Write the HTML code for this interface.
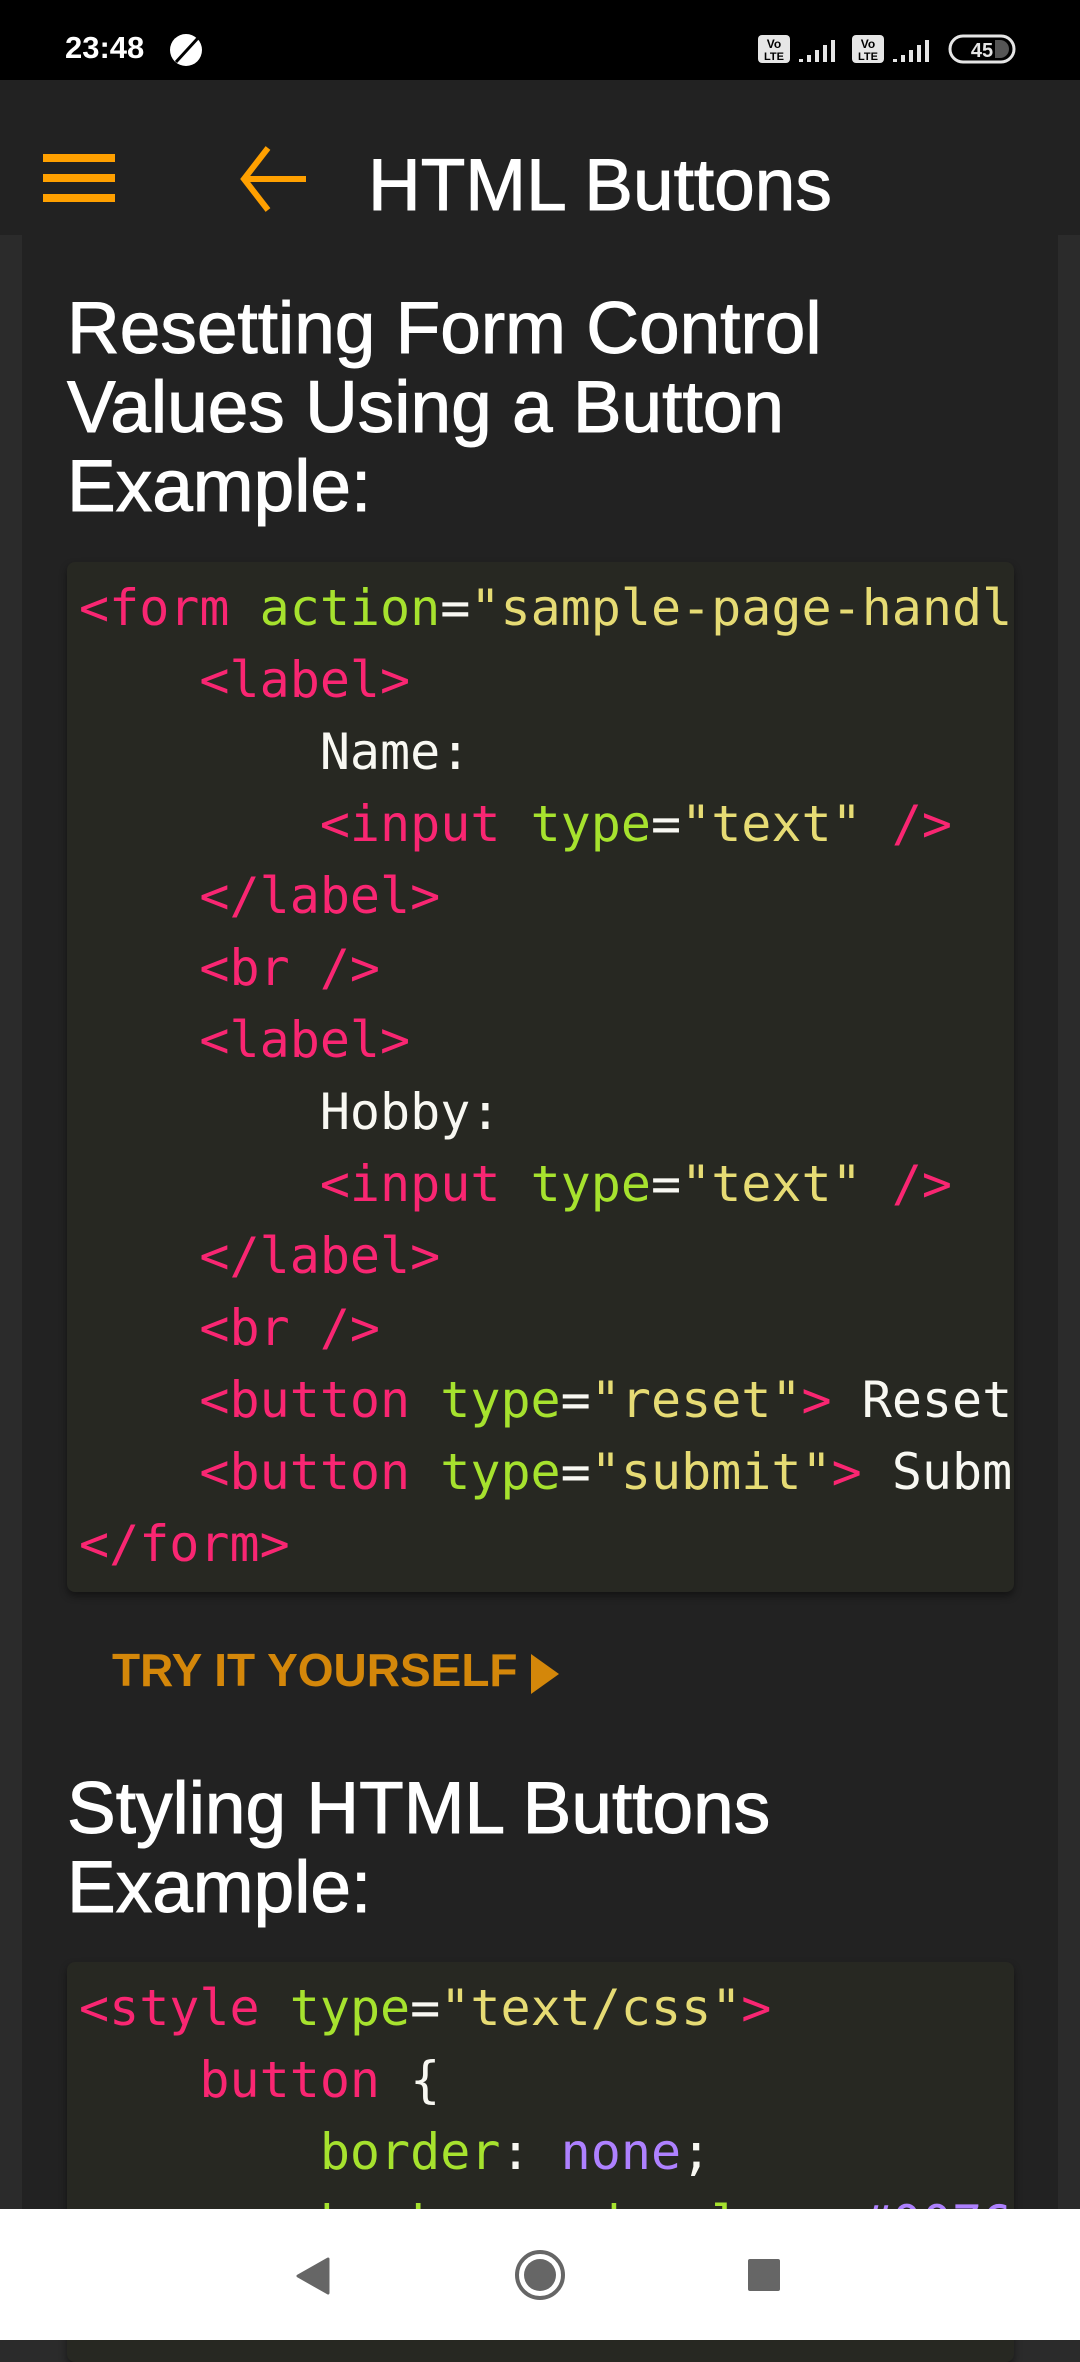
<!DOCTYPE html>
<html><head><meta charset="utf-8"><style>
*{margin:0;padding:0;box-sizing:border-box}
body{width:1080px;height:2340px;overflow:hidden;background:#2b2b2b;font-family:"Liberation Sans",sans-serif;position:relative}
.sb{position:absolute;left:0;top:0;width:1080px;height:80px;background:#000}
.app{position:absolute;left:0;top:80px;width:1080px;height:155px;background:#222}
.content{position:absolute;left:22px;top:235px;width:1036px;height:2000px;background:#222}
h2{position:absolute;left:67px;color:#fff;font-size:73px;font-weight:normal;line-height:79px;width:830px;-webkit-text-stroke:1px #fff}
.code{position:absolute;left:67px;width:947px;background:#272822;border-radius:8px;box-shadow:0 4px 8px rgba(0,0,0,.45);overflow:hidden;padding:10px 0 0 12px;font-family:"DejaVu Sans Mono",monospace;font-size:50px;line-height:72px;white-space:pre;color:#f8f8f2}
.t{color:#f92672}.a{color:#a6e22e}.s{color:#e6db74}.p{color:#ae81ff}
.nav{position:absolute;left:0;top:2209px;width:1080px;height:131px;background:#fff}
</style></head><body>
<div class="sb">
<div style="position:absolute;left:65px;top:30px;color:#fff;font-size:31px;font-weight:bold">23:48</div>
<svg style="position:absolute;left:168px;top:32px" width="36" height="36" viewBox="0 0 36 36"><circle cx="18" cy="18" r="16" fill="#fff"/><path d="M8 30 L30 6" stroke="#000" stroke-width="3"/></svg>
<svg style="position:absolute;left:750px;top:30px" width="280" height="40" viewBox="750 30 280 40">
<rect x="758" y="35" width="32" height="28" rx="4" fill="#e6e6e6"/><text x="774" y="48" font-size="12" font-weight="bold" text-anchor="middle" fill="#000" font-family="Liberation Sans">Vo</text><text x="774" y="60" font-size="11" font-weight="bold" text-anchor="middle" fill="#000" font-family="Liberation Sans">LTE</text>
<path d="M799 62v-3h4v3zM807 62v-7h4v7zM815 62v-12h4v12zM823 62v-17h4v17zM831 62v-22h4v22z" fill="#e6e6e6"/>
<rect x="852" y="35" width="32" height="28" rx="4" fill="#e6e6e6"/><text x="868" y="48" font-size="12" font-weight="bold" text-anchor="middle" fill="#000" font-family="Liberation Sans">Vo</text><text x="868" y="60" font-size="11" font-weight="bold" text-anchor="middle" fill="#000" font-family="Liberation Sans">LTE</text>
<path d="M893 62v-3h4v3zM901 62v-7h4v7zM909 62v-12h4v12zM917 62v-17h4v17zM925 62v-22h4v22z" fill="#e6e6e6"/>
<rect x="950" y="36" width="64" height="26" rx="13" fill="none" stroke="#e6e6e6" stroke-width="3"/><path d="M995 40h5a9 9 0 0 1 0 18h-5z" fill="#555"/><text x="982" y="57" font-size="20" font-weight="bold" text-anchor="middle" fill="#e6e6e6" font-family="Liberation Sans">45</text>
</svg>
</div>
<div class="app">
<div style="position:absolute;left:43px;top:74px;width:72px;height:8px;background:#ffa000"></div>
<div style="position:absolute;left:43px;top:94px;width:72px;height:8px;background:#ffa000"></div>
<div style="position:absolute;left:43px;top:114px;width:72px;height:8px;background:#ffa000"></div>
<svg style="position:absolute;left:238px;top:65px" width="72" height="68" viewBox="0 0 72 68"><path d="M30 3 L6 34 L30 65 M6 34 H68" fill="none" stroke="#ffa000" stroke-width="6"/></svg>
<div style="position:absolute;left:368px;top:66px;color:#fff;font-size:73px;line-height:80px;-webkit-text-stroke:1px #fff">HTML Buttons</div>
</div>
<div class="content"></div>
<h2 style="top:289px">Resetting Form Control Values Using a Button Example:</h2>
<div class="code" style="top:562px;height:1030px"><span class="t">&lt;form</span> <span class="a">action</span>=<span class="s">"sample-page-handler"</span><span class="t">&gt;</span>
    <span class="t">&lt;label&gt;</span>
        Name:
        <span class="t">&lt;input</span> <span class="a">type</span>=<span class="s">"text"</span> <span class="t">/&gt;</span>
    <span class="t">&lt;/label&gt;</span>
    <span class="t">&lt;br /&gt;</span>
    <span class="t">&lt;label&gt;</span>
        Hobby:
        <span class="t">&lt;input</span> <span class="a">type</span>=<span class="s">"text"</span> <span class="t">/&gt;</span>
    <span class="t">&lt;/label&gt;</span>
    <span class="t">&lt;br /&gt;</span>
    <span class="t">&lt;button</span> <span class="a">type</span>=<span class="s">"reset"</span><span class="t">&gt;</span> Reset
    <span class="t">&lt;button</span> <span class="a">type</span>=<span class="s">"submit"</span><span class="t">&gt;</span> Submit
<span class="t">&lt;/form&gt;</span></div>
<div style="position:absolute;left:112px;top:1644px;color:#d4870a;font-size:46px;font-weight:bold;line-height:52px">TRY IT YOURSELF</div>
<svg style="position:absolute;left:529px;top:1652px" width="32" height="44" viewBox="0 0 32 44"><path d="M2 2 L30 22 L2 42 Z" fill="#d4870a"/></svg>
<h2 style="top:1769px">Styling HTML Buttons Example:</h2>
<div class="code" style="top:1962px;height:400px"><span class="t">&lt;style</span> <span class="a">type</span>=<span class="s">"text/css"</span><span class="t">&gt;</span>
    <span class="t">button</span> {
        <span class="a">border</span>: <span class="p">none</span>;
        <span class="a">background-color</span>: <span class="p">#0076ff</span>;</div>
<div class="nav">
<svg style="position:absolute;left:296px;top:48px" width="34" height="38" viewBox="0 0 34 38"><path d="M32 2 L2 19 L32 36 Z" fill="#666" stroke="#666" stroke-width="3" stroke-linejoin="round"/></svg>
<div style="position:absolute;left:515px;top:41px;width:50px;height:50px;border:4px solid #666;border-radius:50%"></div>
<div style="position:absolute;left:524px;top:50px;width:32px;height:32px;background:#666;border-radius:50%"></div>
<div style="position:absolute;left:748px;top:50px;width:32px;height:32px;background:#666;border-radius:2px"></div>
</div>
</body></html>
